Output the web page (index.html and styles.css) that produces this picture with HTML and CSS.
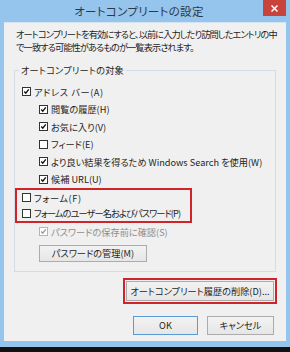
FILE: index.html
```html
<!DOCTYPE html>
<html lang="ja">
<head>
    <meta charset="UTF-8">
    <title>オートコンプリートの設定</title>
    <link rel="stylesheet" href="styles.css">
</head>
<body>
    <div class="window">
        <div class="titlebar">
            <span></span>
            <h1 class="title">オートコンプリートの設定</h1>
            <button class="close" aria-label="閉じる">
                <svg width="7" height="7" viewBox="0 0 7 7"><path d="M0.5 0.5 L6.5 6.5 M6.5 0.5 L0.5 6.5"/></svg>
            </button>
        </div>

        <div class="client">
            <p class="intro">オートコンプリートを有効にすると、以前に入力したり訪問したエントリの中<br>で一致する可能性があるものが一覧表示されます。</p>

            <fieldset class="group">
                <legend>オートコンプリートの対象</legend>

                <label class="row wide"><span class="box"><svg viewBox="0 0 9 9"><path d="M1.6 4.4 L3.6 6.6 L7.4 1.8"/></svg></span>アドレス バー(A)</label>
                <label class="row sub"><span class="box"><svg viewBox="0 0 9 9"><path d="M1.6 4.4 L3.6 6.6 L7.4 1.8"/></svg></span>閲覧の履歴(H)</label>
                <label class="row sub"><span class="box"><svg viewBox="0 0 9 9"><path d="M1.6 4.4 L3.6 6.6 L7.4 1.8"/></svg></span>お気に入り(V)</label>
                <label class="row sub"><span class="box"></span>フィード(E)</label>
                <label class="row sub"><span class="box"><svg viewBox="0 0 9 9"><path d="M1.6 4.4 L3.6 6.6 L7.4 1.8"/></svg></span>より良い結果を得るため Windows Search を使用(W)</label>
                <label class="row sub"><span class="box"><svg viewBox="0 0 9 9"><path d="M1.6 4.4 L3.6 6.6 L7.4 1.8"/></svg></span>候補 URL(U)</label>

                <!-- highlighted rows -->
                <div class="highlight">
                    <label class="row wide"><span class="box"></span>フォーム(F)</label>
                    <label class="row tight"><span class="box"></span>フォームのユーザー名およびパスワード(P)</label>
                </div>

                <label class="row sub disabled"><span class="box"><svg viewBox="0 0 9 9"><path d="M1.6 4.4 L3.6 6.6 L7.4 1.8"/></svg></span>パスワードの保存前に確認(S)</label>
                <button class="btn manage">パスワードの管理(M)</button>
            </fieldset>

            <div class="delete-row">
                <div class="mark">
                    <button class="btn delete">オートコンプリート履歴の削除(D)...</button>
                </div>
            </div>

            <div class="footer">
                <button class="btn default">OK</button>
                <button class="btn cancel">キャンセル</button>
            </div>
        </div>

        <div class="bottom-edge"></div>
    </div>
</body>
</html>
```

FILE: styles.css
```css
body {
    margin: 0;
    background: #111;
    font-family: "Noto Sans CJK JP", "Noto Sans", sans-serif;
    font-feature-settings: "palt";
    color: #1e1e1e;
}
.window {
    width: 290px;
    height: 347px;
    background: #95c4ec;
    display: flex;
    flex-direction: column;
}
.titlebar {
    height: 22px;
    display: grid;
    grid-template-columns: 1fr auto 1fr;
    align-items: start;
}
.title {
    margin: 0 12px 0 0;
    font-size: 11.5px;
    font-weight: normal;
    line-height: 23px;
    color: #2b3a4a;
    letter-spacing: 0.3px;
}
.close {
    justify-self: end;
    width: 23px;
    height: 16px;
    margin-right: 4px;
    padding: 0;
    border: none;
    background: #c9433d;
    display: flex;
    align-items: center;
    justify-content: center;
}
.close svg path {
    stroke: #fff;
    stroke-width: 1.5;
    fill: none;
}
.client {
    margin: 0 4px;
    height: 319px;
    box-sizing: border-box;
    background: #f0f0f0;
    border-top: 1px solid #d6e4f0;
    padding: 5px 10px 0 10px;
    font-size: 9.2px;
}
.intro {
    margin: 0 0 0 2px;
    line-height: 13px;
    white-space: nowrap;
    letter-spacing: -0.9px;
}
.group {
    margin: 10px 0 0 0;
    padding: 6px 0 9px 0;
    border: 1px solid #d5dce2;
    min-width: 0;
}
.group legend {
    margin-left: 4px;
    padding: 0 2px;
    line-height: 13px;
    letter-spacing: 0.2px;
}
.row {
    display: flex;
    align-items: center;
    height: 17.5px;
    margin-left: 7px;
    white-space: nowrap;
}
.row.sub { margin-left: 24px; }
.row.wide { letter-spacing: 0.6px; }
.row.tight { letter-spacing: -0.9px; }
.box {
    width: 9px;
    height: 9px;
    box-sizing: border-box;
    border: 1px solid #333;
    background: #fff;
    margin-right: 3px;
    flex: none;
    display: flex;
}
.box svg { width: 7px; height: 7px; }
.box svg path {
    fill: none;
    stroke: #111;
    stroke-width: 1.8;
}
.disabled { color: #8d8d8d; }
.disabled .box { border-color: #b5b5b5; }
.disabled .box svg path { stroke: #9a9a9a; }

.highlight {
    width: 177px;
    box-sizing: border-box;
    border: 2px solid #d0242b;
}
.highlight .row {
    height: 15.5px;
    margin-left: 5px;
}

.btn {
    font: inherit;
    font-size: 9.2px;
    color: #1e1e1e;
    border: 1px solid #acacac;
    background: linear-gradient(#f2f2f2, #e6e6e6);
    padding: 0;
    box-sizing: border-box;
    white-space: nowrap;
}
.manage {
    display: block;
    width: 108px;
    height: 17px;
    margin: 4px 0 0 24px;
}
.delete-row {
    display: flex;
    justify-content: flex-end;
    margin: 6px -1px 0 0;
}
.mark {
    border: 2px solid #d0242b;
    padding: 1px;
}
.delete {
    display: block;
    width: 148px;
    height: 20px;
}
.footer {
    display: flex;
    justify-content: flex-end;
    gap: 9px;
    margin: 12px 2px 0 0;
}
.footer .btn { height: 19px; }
.default {
    width: 65px;
    border-color: #5a9bd5;
}
.cancel { width: 67px; }
.bottom-edge {
    height: 6px;
}
```
